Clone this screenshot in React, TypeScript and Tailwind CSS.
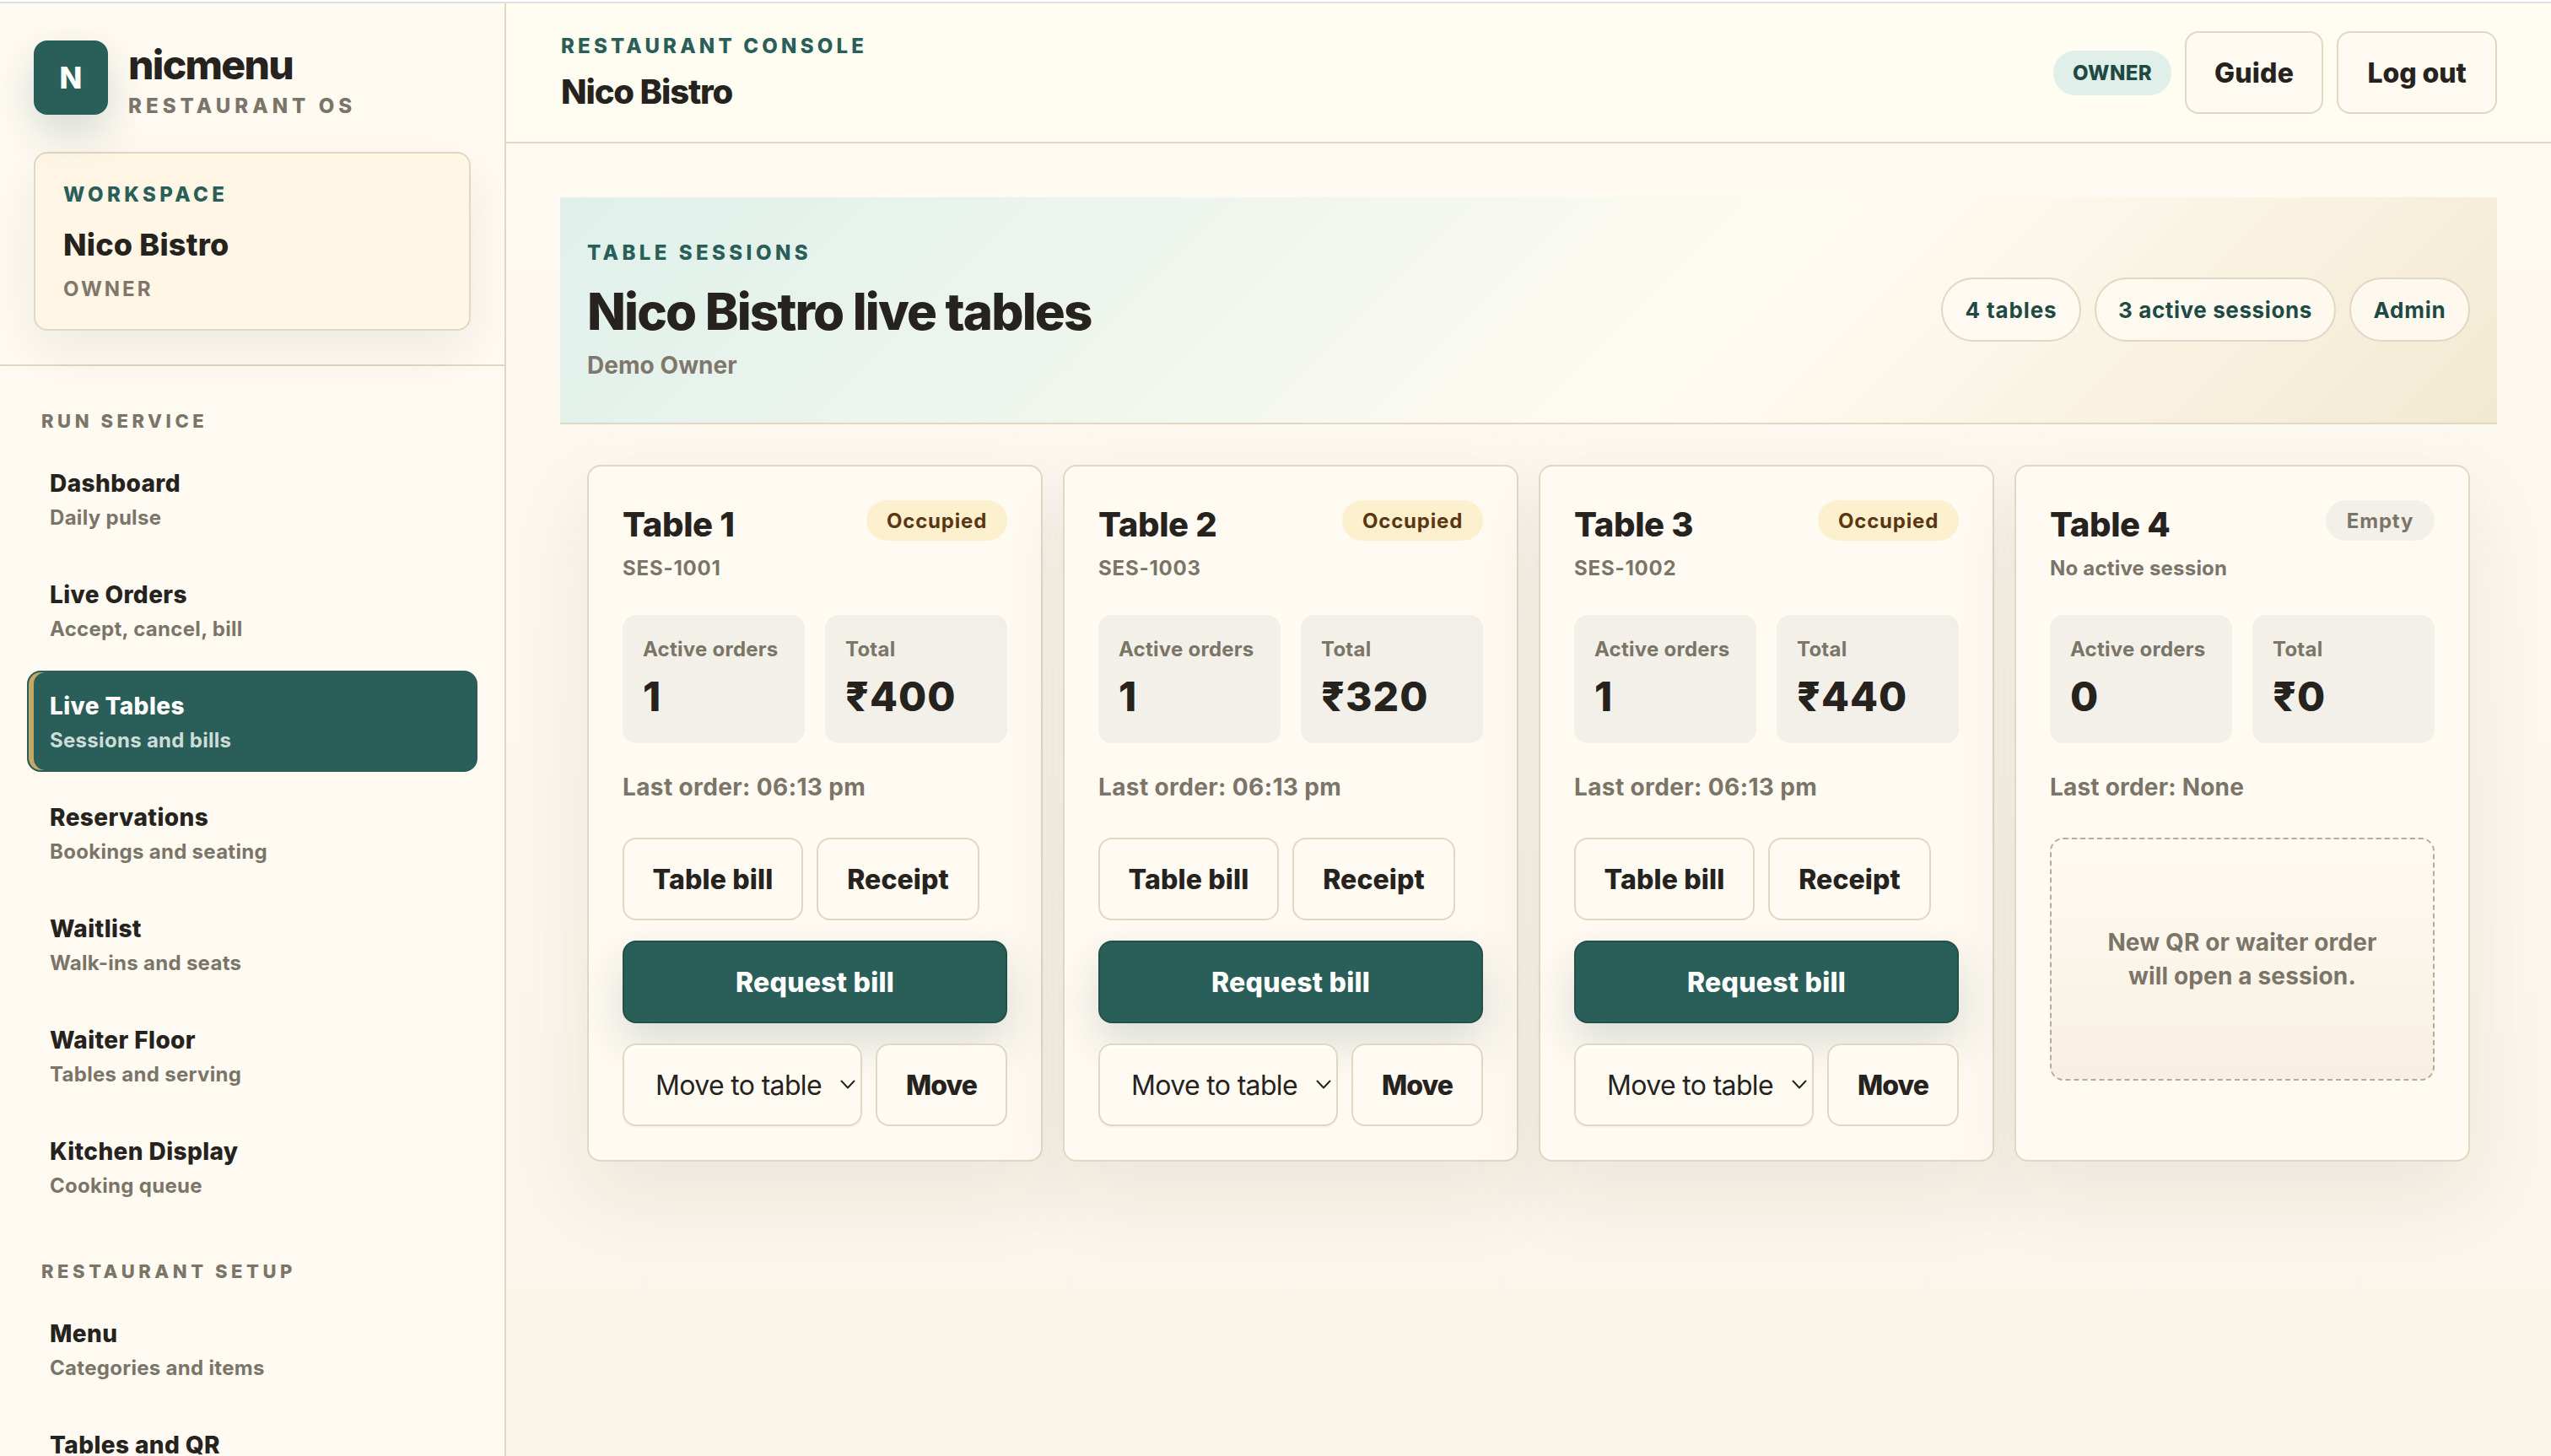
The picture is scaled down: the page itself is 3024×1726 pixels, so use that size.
import clsx from "clsx";

type NavItem = { label: string; hint?: string; active?: boolean };

type TableCard = {
  name: string;
  session: string | null;
  orders: number;
  total: string;
  lastOrder: string;
};

const navSections: { title: string; items: NavItem[] }[] = [
  {
    title: "RUN SERVICE",
    items: [
      { label: "Dashboard", hint: "Daily pulse" },
      { label: "Live Orders", hint: "Accept, cancel, bill" },
      { label: "Live Tables", hint: "Sessions and bills", active: true },
      { label: "Reservations", hint: "Bookings and seating" },
      { label: "Waitlist", hint: "Walk-ins and seats" },
      { label: "Waiter Floor", hint: "Tables and serving" },
      { label: "Kitchen Display", hint: "Cooking queue" },
    ],
  },
  {
    title: "RESTAURANT SETUP",
    items: [
      { label: "Menu", hint: "Categories and items" },
      { label: "Tables and QR" },
    ],
  },
];

const tables: TableCard[] = [
  { name: "Table 1", session: "SES-1001", orders: 1, total: "₹400", lastOrder: "06:13 pm" },
  { name: "Table 2", session: "SES-1003", orders: 1, total: "₹320", lastOrder: "06:13 pm" },
  { name: "Table 3", session: "SES-1002", orders: 1, total: "₹440", lastOrder: "06:13 pm" },
  { name: "Table 4", session: null, orders: 0, total: "₹0", lastOrder: "None" },
];

const secondaryButton =
  "flex h-[98px] items-center justify-center rounded-2xl border-2 border-[#e1d7c2] bg-[#fffaf2] pt-0.5 text-[32px] font-extrabold";

const Sidebar = () => (
  <aside className="flex h-full w-[600px] shrink-0 flex-col overflow-hidden border-r-2 border-[#e1d7c2] bg-[#fffaf2]">
    <div className="border-b-2 border-[#e1d7c2] px-10 pt-11 pb-10">
      <div className="flex h-[88px] gap-6">
        <div className="flex size-[88px] items-center justify-center rounded-2xl bg-[#2a5e58] text-[35px] font-extrabold text-white shadow-[0_20px_48px_rgba(42,94,88,0.2)]">
          N
        </div>
        <div className="flex flex-col pt-px">
          <span className="text-[48px] leading-[56px] font-[850] tracking-[-1.7px]">nicmenu</span>
          <span className="mt-[7px] text-[24px] leading-[28px] font-extrabold tracking-[5.05px] text-[#7b7568]">
            RESTAURANT OS
          </span>
        </div>
      </div>

      <div className="mt-11 flex h-[212px] flex-col rounded-2xl border-2 border-[#e1d7c2] bg-[#fff6e6] px-[33px] pt-[33px] shadow-[0_24px_68px_rgba(38,35,30,0.08)]">
        <span className="text-[24px] leading-8 font-extrabold tracking-[4.4px] text-[#2a5e58]">WORKSPACE</span>
        <span className="mt-[19px] text-[36px] leading-[48px] font-extrabold tracking-[0.2px]">Nico Bistro</span>
        <span className="mt-[13px] text-[24px] leading-8 font-[650] tracking-[3px] text-[#80776c]">OWNER</span>
      </div>
    </div>

    <nav className="flex flex-col gap-12 px-8 pt-[49px]">
      {navSections.map((section) => (
        <div key={section.title}>
          <div className="pl-[17px] text-[22px] leading-8 font-extrabold tracking-[4.55px] text-[#7b7568]">
            {section.title}
          </div>
          <div className="mt-4 flex flex-col gap-3">
            {section.items.map((item) => (
              <a
                key={item.label}
                className={clsx(
                  "flex h-[120px] w-[534px] flex-col rounded-2xl border-2 px-[25px] pt-5",
                  item.active
                    ? "border-[#2a5e58] bg-[#2a5e58] text-white shadow-[inset_6px_0_0_#c5a867]"
                    : "border-transparent"
                )}
              >
                <span className="text-[28px] leading-10 font-extrabold tracking-[0.4px]">{item.label}</span>
                {item.hint && (
                  <span
                    className={clsx(
                      "mt-[3px] text-[24px] leading-9 font-[650] tracking-[0.3px]",
                      item.active ? "text-[#cddcd9]" : "text-[#7b7568]"
                    )}
                  >
                    {item.hint}
                  </span>
                )}
              </a>
            ))}
          </div>
        </div>
      ))}
    </nav>
  </aside>
);

const Header = () => (
  <header className="flex h-[166px] shrink-0 items-center justify-between border-b-2 border-[#e1d7c2] bg-[#fffdf1] px-16">
    <div className="flex flex-col pt-[3px] pl-px">
      <span className="text-[24px] leading-8 font-extrabold tracking-[4.2px] text-[#2a5e58]">
        RESTAURANT CONSOLE
      </span>
      <span className="mt-2.5 text-[40px] leading-[56px] font-[850] tracking-[-1.15px]">Nico Bistro</span>
    </div>
    <div className="flex items-center gap-4">
      <span className="flex h-[53px] w-[140px] items-center justify-center rounded-full bg-[#e0efea] pt-px text-[24px] font-extrabold tracking-[0.4px] text-[#1f4a44]">
        OWNER
      </span>
      <button className={clsx(secondaryButton, "w-[164px] tracking-[0.2px]")}>Guide</button>
      <button className={clsx(secondaryButton, "w-[190px] tracking-[-0.1px]")}>Log out</button>
    </div>
  </header>
);

const Hero = () => (
  <section className="flex h-[269px] items-center justify-between border-b-2 border-[#e1d7c2] bg-[linear-gradient(135deg,#dff0eb_0%,#fffbf1_62%,#f2e9d1_100%)] px-8">
    <div className="flex flex-col">
      <span className="pt-px text-[24px] leading-8 font-extrabold tracking-[4.45px] text-[#2a5e58]">
        TABLE SESSIONS
      </span>
      <h1 className="mt-[17px] text-[60px] leading-[72px] font-[850] tracking-[-1.85px]">Nico Bistro live tables</h1>
      <span className="mt-2 text-[28px] leading-10 font-[650] tracking-[0.05px] text-[#80776c]">Demo Owner</span>
    </div>
    <div className="-mt-px flex gap-4 text-[26px] font-[750] text-[#1f4a44]">
      <span className="flex h-[76px] w-[166px] items-center justify-center rounded-full border-2 border-[#e1d7c2] bg-[#fffaf2]/85 pt-px tracking-[0.85px]">
        4 tables
      </span>
      <span className="flex h-[76px] w-[286px] items-center justify-center rounded-full border-2 border-[#e1d7c2] bg-[#fffaf2]/85 pt-px tracking-[0.6px]">
        3 active sessions
      </span>
      <span className="flex h-[76px] w-[143px] items-center justify-center rounded-full border-2 border-[#e1d7c2] bg-[#fffaf2]/85 pt-px tracking-[0.8px]">
        Admin
      </span>
    </div>
  </section>
);

const Stat = ({ label, value }: { label: string; value: string | number }) => (
  <div className="flex h-[152px] flex-col rounded-2xl bg-[#f3f0e9] px-6 pt-[25px]">
    <span className="text-[24px] leading-8 font-[650] tracking-[0.25px] text-[#7b7568]">{label}</span>
    <span className="mt-3 text-[48px] leading-[56px] font-[850] tracking-[1px]">{value}</span>
  </div>
);

const SessionActions = () => (
  <div className="mt-10 flex flex-col gap-6">
    <div className="flex gap-4">
      <button className={clsx(secondaryButton, "w-[214px] tracking-[0.15px]")}>Table bill</button>
      <button className={clsx(secondaryButton, "w-[193px] tracking-[0.1px]")}>Receipt</button>
    </div>
    <button className="h-[98px] rounded-2xl border-2 border-[#235048] bg-[#2a5e58] pt-0.5 text-[32px] font-extrabold tracking-[0.25px] text-white shadow-[0_24px_52px_rgba(42,94,88,0.18)]">
      Request bill
    </button>
    <div className="flex gap-4">
      <div className="flex h-[98px] w-[284px] items-center justify-between rounded-2xl border-2 border-[#e1d7c2] bg-[#fffaf2] pr-1.5 pl-[37px] text-[32px] shadow-[inset_0_2px_0_#ffffff,0_2px_2px_rgba(38,35,30,0.04)]">
        <span className="pt-0.5 tracking-[-0.65px] whitespace-nowrap">Move to table</span>
        <svg width="18" height="12" viewBox="0 0 18 12" fill="none">
          <path d="M1.5 1.5 9 9.5l7.5-8" stroke="#26231e" strokeWidth="2" strokeLinecap="round" strokeLinejoin="round" />
        </svg>
      </div>
      <button className={clsx(secondaryButton, "w-[156px] tracking-[-0.9px]")}>Move</button>
    </div>
  </div>
);

const Card = ({ table }: { table: TableCard }) => (
  <article className="h-[826px] rounded-2xl border-2 border-[#e1d7c2] bg-[#fffaf2] p-10 shadow-[0_36px_100px_rgba(38,35,30,0.08)]">
    <div className="flex items-start justify-between">
      <div className="flex flex-col">
        <h2 className="text-[40px] leading-[57px] font-[850] tracking-[-0.35px]">{table.name}</h2>
        <span
          className={clsx(
            "mt-2 -mb-px text-[24px] leading-8 font-[650] text-[#7b7568]",
            table.session ? "tracking-[0.8px]" : "tracking-[0.2px]"
          )}
        >
          {table.session ?? "No active session"}
        </span>
      </div>
      <span
        className={clsx(
          "flex h-12 items-center justify-center rounded-full pt-px text-[24px] font-[750] tracking-[0.8px]",
          table.session ? "w-[167px] bg-[#fdf0cf] text-[#5a3712]" : "w-[129px] bg-[#f3f0e9] text-[#7b7568]"
        )}
      >
        {table.session ? "Occupied" : "Empty"}
      </span>
    </div>

    <div className="mt-10 grid grid-cols-2 gap-6">
      <Stat label="Active orders" value={table.orders} />
      <Stat label="Total" value={table.total} />
    </div>

    <p
      className={clsx(
        "mt-8 text-[28px] leading-10 font-[650] text-[#7b7568]",
        table.session ? "tracking-[0.38px]" : "tracking-[0.2px]"
      )}
    >
      Last order: {table.lastOrder}
    </p>

    {table.session ? (
      <SessionActions />
    ) : (
      <div className="mt-10 flex h-[288px] items-center justify-center rounded-2xl border-2 border-dashed border-[#b5ad9a] bg-linear-to-b from-[#fffaf2] to-[#f7efe2] text-center text-[28px] leading-10 font-[650] tracking-[0.15px] text-[#7b7568]">
        New QR or waiter order
        <br />
        will open a session.
      </div>
    )}
  </article>
);

const App = () => (
  <div className="flex h-[1726px] w-[3024px] flex-col overflow-hidden bg-white font-[Inter,sans-serif] text-[#26231e]">
    <div className="mt-0.5 h-0.5 shrink-0 bg-[#e1e1e3]" />
    <div className="flex min-h-0 flex-1">
      <Sidebar />
      <div className="flex min-w-0 flex-1 flex-col bg-linear-to-b from-[#fffaf2] to-[#f9f5e9]">
        <Header />
        <main className="px-16 pt-16">
          <Hero />
          <div className="grid grid-cols-4 gap-6 px-8 pt-12">
            {tables.map((table) => (
              <Card key={table.name} table={table} />
            ))}
          </div>
        </main>
      </div>
    </div>
  </div>
);

export default App;
